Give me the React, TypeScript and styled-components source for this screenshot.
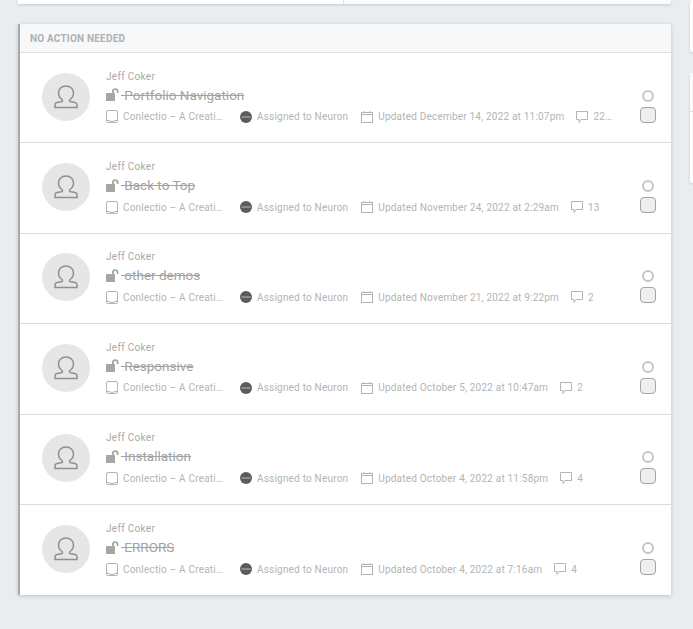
import styled, { createGlobalStyle } from "styled-components";

const GlobalStyle = createGlobalStyle`
  html, body {
    margin: 0;
    height: 100%;
    overflow: hidden;
    background: #e9edf0;
    font-family: Roboto, "Liberation Sans", sans-serif;
  }
`;

const Page = styled.div`
  display: grid;
  grid-template-columns: 653px 40px;
  column-gap: 19px;
  padding-left: 18px;
  height: 629px;
  overflow: hidden;
  align-items: start;
`;

const MainColumn = styled.div`
  display: flex;
  flex-direction: column;
  gap: 20px;
`;

const TopCard = styled.div`
  height: 4px;
  background: #fff;
  box-shadow: 0 1px 3px rgba(0, 0, 0, 0.15);
  display: grid;
  grid-template-columns: 325px 1fr;
`;

const TopCardCell = styled.div`
  & + & {
    border-left: 1px solid #e2e2e2;
    background: #fbfbfb;
  }
`;

const Panel = styled.section`
  background: #fff;
  border-left: 2px solid #a9a9a9;
  box-shadow: 0 1px 4px rgba(0, 0, 0, 0.18);
`;

const PanelHeader = styled.header`
  height: 28px;
  padding-left: 10px;
  display: flex;
  align-items: center;
  background: #f8f8f8;
  border-bottom: 1px solid #e0e0e0;
  font-size: 10px;
  font-weight: 700;
  letter-spacing: 0.2px;
  color: #adb0b4;
`;

const Row = styled.article`
  height: 90.4px;
  box-sizing: border-box;
  display: flex;
  align-items: center;
  padding: 0 15px 2px 22px;
  border-bottom: 1px solid #dcdcdc;
  &:last-child {
    border-bottom: 0;
  }
`;

const Avatar = styled.div`
  width: 48px;
  height: 48px;
  flex: none;
  border-radius: 50%;
  background: #e6e6e6;
  color: #8f8f8f;
  display: flex;
  align-items: center;
  justify-content: center;
`;

const Body = styled.div`
  flex: 1;
  min-width: 0;
  margin: 1px 0 0 16px;
  display: flex;
  flex-direction: column;
`;

const Author = styled.div`
  font-size: 10px;
  line-height: 12px;
  letter-spacing: 0.3px;
  color: #a9a9a9;
`;

const Title = styled.div`
  display: flex;
  align-items: center;
  gap: 2px;
  height: 18px;
  margin-top: 3px;
`;

const TitleText = styled.span`
  font-size: 13.5px;
  line-height: 18px;
  color: #a3a3a3;
  text-decoration: line-through;
  white-space: nowrap;
`;

const Meta = styled.div`
  display: flex;
  align-items: center;
  height: 14px;
  margin-top: 6px;
  font-size: 10px;
  letter-spacing: 0.2px;
  color: #b4b4b4;
  white-space: nowrap;
`;

const MetaItem = styled.span<{ $width?: number; $gap?: number }>`
  display: flex;
  align-items: center;
  flex: none;
  gap: 5px;
  margin-right: ${(p) => p.$gap ?? 13}px;
  ${(p) => (p.$width ? `width: ${p.$width}px;` : "")}
  svg {
    flex: none;
  }
`;

const Controls = styled.div`
  flex: none;
  width: 16px;
  display: flex;
  flex-direction: column;
  align-items: center;
  gap: 5px;
  margin-top: 19px;
`;

const Radio = styled.span`
  width: 12px;
  height: 12px;
  box-sizing: border-box;
  border: 2px solid #c4c4c4;
  border-radius: 50%;
`;

const Check = styled.span`
  width: 16px;
  height: 16px;
  box-sizing: border-box;
  border: 1px solid #a4a4a4;
  border-radius: 4px;
  background: #eeeeee;
`;

const SideColumn = styled.div`
  display: flex;
  flex-direction: column;
`;

const SideCard = styled.div<{ $height: number; $top: number }>`
  height: ${(p) => p.$height}px;
  margin-top: ${(p) => p.$top}px;
  box-sizing: border-box;
  background: #fff;
  border-radius: 3px 0 0 3px;
  box-shadow: 0 1px 3px rgba(0, 0, 0, 0.12);
`;

const SideCardHeader = styled.div`
  height: 38px;
  background: #fbfbfb;
  border-bottom: 1px solid #e0e0e0;
`;

const PersonIcon = () => (
  <svg width="24" height="24" viewBox="0 0 24 24" fill="none" stroke="currentColor" strokeWidth="1.5">
    <path d="M12 1C7.500 1 4.500 4 4.500 8C4.500 11 6 13 8 14.500C9 15.300 8.500 16.500 7 16.800L3 17.500C1.800 17.800 1 18.500 1 19.800V22.500H23V19.800C23 18.500 22.200 17.800 21 17.500L17 16.800C15.500 16.500 15 15.300 16 14.500C18 13 19.500 11 19.500 8C19.500 4 16.500 1 12 1Z" />
  </svg>
);

const LockIcon = () => (
  <svg width="13" height="13" viewBox="0 0 13 13" fill="#a6a6a6">
    <rect x="0" y="5" width="9" height="8" rx="0.500" />
    <path d="M6 5V3.500a3.250 3.250 0 0 1 6.500 0V5h-1.800V3.500a1.450 1.450 0 0 0-2.900 0V5z" />
  </svg>
);

const TabletIcon = () => (
  <svg width="12" height="13" viewBox="0 0 12 13" fill="none" stroke="#b4b4b4">
    <rect x="0.500" y="0.500" width="11" height="12" rx="1.500" />
    <path d="M0.500 10.500h3l.500.800h4l.500-.800h3" />
  </svg>
);

const BlockIcon = () => (
  <svg width="12" height="12" viewBox="0 0 12 12">
    <circle cx="6" cy="6" r="6" fill="#5c5c5c" />
    <rect x="1.500" y="5" width="9" height="2" fill="#8c8c8c" />
  </svg>
);

const CalendarIcon = () => (
  <svg width="12" height="12" viewBox="0 0 12 12" fill="none" stroke="#b4b4b4">
    <rect x="0.500" y="1.500" width="11" height="10" />
    <path d="M0.500 3.500h11M3 0v1.500M9 0v1.500" />
  </svg>
);

const CommentIcon = () => (
  <svg width="12" height="12" viewBox="0 0 12 12" fill="none" stroke="#b4b4b4">
    <path d="M0.500 0.500h11v8h-6.500l-2 3v-3h-2.500z" />
  </svg>
);

const items = [
  { title: "Portfolio Navigation", updated: "December 14, 2022 at 11:07pm", comments: "22…" },
  { title: "Back to Top", updated: "November 24, 2022 at 2:29am", comments: "13" },
  { title: "other demos", updated: "November 21, 2022 at 9:22pm", comments: "2" },
  { title: "Responsive", updated: "October 5, 2022 at 10:47am", comments: "2" },
  { title: "Installation", updated: "October 4, 2022 at 11:58pm", comments: "4" },
  { title: "ERRORS", updated: "October 4, 2022 at 7:16am", comments: "4" },
];

export default function App() {
  return (
    <Page>
      <GlobalStyle />
      <MainColumn>
        <TopCard>
          <TopCardCell />
          <TopCardCell />
        </TopCard>
        <Panel>
          <PanelHeader>NO ACTION NEEDED</PanelHeader>
          {items.map((item) => (
            <Row key={item.title}>
              <Avatar>
                <PersonIcon />
              </Avatar>
              <Body>
                <Author>Jeff Coker</Author>
                <Title>
                  <LockIcon />
                  <TitleText>{"\u00a0" + item.title}</TitleText>
                </Title>
                <Meta>
                  <MetaItem $width={118} $gap={16}>
                    <TabletIcon />
                    Conlectio – A Creati…
                  </MetaItem>
                  <MetaItem>
                    <BlockIcon />
                    Assigned to Neuron
                  </MetaItem>
                  <MetaItem $gap={12}>
                    <CalendarIcon />
                    Updated {item.updated}
                  </MetaItem>
                  <MetaItem>
                    <CommentIcon />
                    {item.comments}
                  </MetaItem>
                </Meta>
              </Body>
              <Controls>
                <Radio />
                <Check />
              </Controls>
            </Row>
          ))}
        </Panel>
      </MainColumn>
      <SideColumn>
        <SideCard $height={52} $top={0} />
        <SideCard $height={110} $top={21}>
          <SideCardHeader />
        </SideCard>
      </SideColumn>
    </Page>
  );
}
